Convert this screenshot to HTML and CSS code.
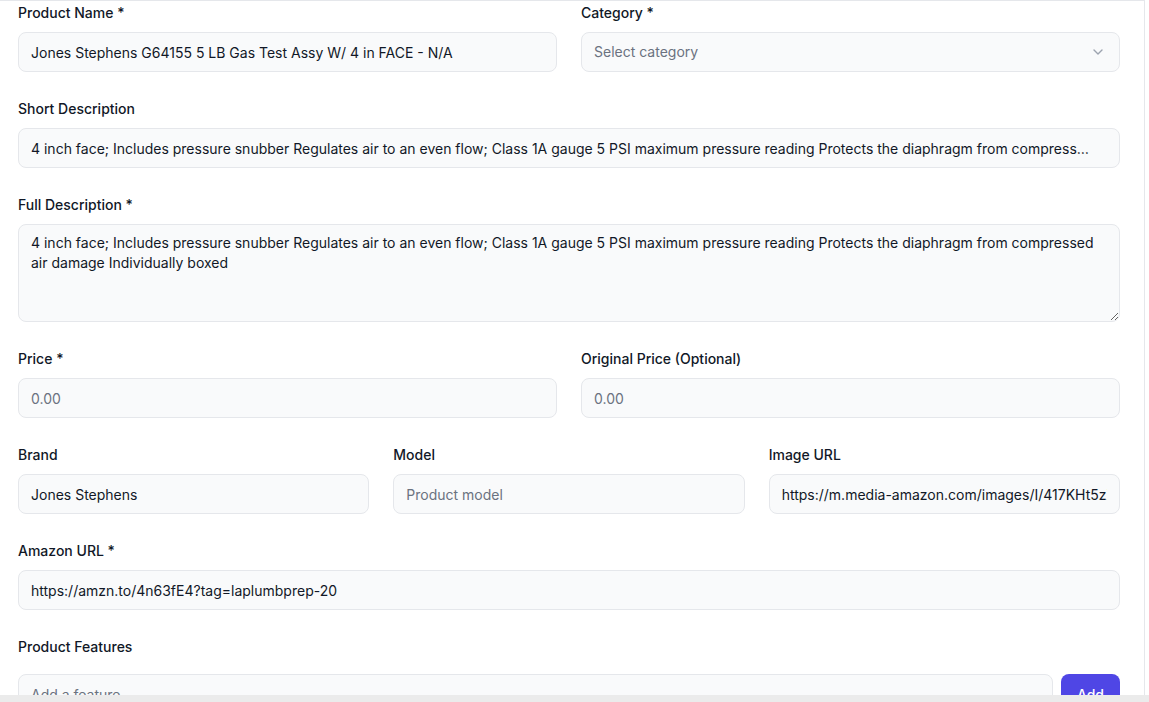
FILE: index.html
```html
<!DOCTYPE html>
<html lang="en">
<head>
<meta charset="utf-8">
<title>Edit Product</title>
<link rel="stylesheet" href="styles.css">
</head>
<body>
<div class="panel">
  <form class="form">
    <div class="row cols-2">
      <div class="field">
        <label class="label">Product Name *</label>
        <input class="input" type="text" value="Jones Stephens G64155 5 LB Gas Test Assy W/ 4 in FACE - N/A">
      </div>
      <div class="field">
        <label class="label">Category *</label>
        <div class="select">
          <span class="select-text">Select category</span>
          <svg class="chevron" width="16" height="16" viewBox="0 0 16 16" fill="none"><polyline points="4,6 8,10 12,6" stroke="#9ca3af" stroke-width="1.4" stroke-linecap="round" stroke-linejoin="round"/></svg>
        </div>
      </div>
    </div>

    <div class="field">
      <label class="label">Short Description</label>
      <input class="input ellipsis" type="text" value="4 inch face; Includes pressure snubber Regulates air to an even flow; Class 1A gauge 5 PSI maximum pressure reading Protects the diaphragm from compressed air damage Individually boxed">
    </div>

    <div class="field">
      <label class="label">Full Description *</label>
      <textarea class="input textarea" rows="4">4 inch face; Includes pressure snubber Regulates air to an even flow; Class 1A gauge 5 PSI maximum pressure reading Protects the diaphragm from compressed air damage Individually boxed</textarea>
    </div>

    <div class="row cols-2">
      <div class="field">
        <label class="label">Price *</label>
        <input class="input" type="text" placeholder="0.00">
      </div>
      <div class="field">
        <label class="label">Original Price (Optional)</label>
        <input class="input" type="text" placeholder="0.00">
      </div>
    </div>

    <div class="row cols-3">
      <div class="field">
        <label class="label">Brand</label>
        <input class="input" type="text" value="Jones Stephens">
      </div>
      <div class="field">
        <label class="label">Model</label>
        <input class="input" type="text" placeholder="Product model">
      </div>
      <div class="field">
        <label class="label">Image URL</label>
        <input class="input" type="text" value="https://m.media-amazon.com/images/I/417KHt5zXqL._SL500_.jpg">
      </div>
    </div>

    <div class="field">
      <label class="label">Amazon URL *</label>
      <input class="input" type="text" value="https://amzn.to/4n63fE4?tag=laplumbprep-20">
    </div>

    <div class="field">
      <label class="label label-lg">Product Features</label>
      <div class="feature-row">
        <input class="input" type="text" placeholder="Add a feature">
        <button type="button" class="btn">Add</button>
      </div>
    </div>
  </form>
</div>
<div class="hscroll"></div>
</body>
</html>
```

FILE: styles.css
```css
html, body {
  margin: 0;
  padding: 0;
  overflow: hidden;
  background: #ffffff;
}

body {
  font-family: Inter, "Noto Sans", "Liberation Sans", sans-serif;
  font-size: 14px;
  line-height: 20px;
  color: #111827;
}

.panel {
  box-sizing: border-box;
  width: 1145px;
  border-top: 1px solid #e5e7eb;
  border-right: 1px solid #e5e7eb;
  padding: 2px 24px 40px 18px;
  background: #ffffff;
}

.form {
  display: flex;
  flex-direction: column;
  gap: 27px;
}

.row {
  display: grid;
  gap: 24px;
}

.cols-2 {
  grid-template-columns: 1fr 1fr;
}

.cols-3 {
  grid-template-columns: 1fr 1fr 1fr;
}

.field {
  display: flex;
  flex-direction: column;
  min-width: 0;
}

.label {
  display: block;
  font-weight: 500;
  font-size: 14px;
  line-height: 20px;
  color: #111827;
  margin-bottom: 9px;
}

.label-lg {
  margin-bottom: 17px;
}

.input {
  box-sizing: border-box;
  width: 100%;
  height: 40px;
  margin: 0;
  padding: 0 12px;
  border: 1px solid #e5e7eb;
  border-radius: 8px;
  background: #f9fafb;
  font-family: Inter, "Noto Sans", "Liberation Sans", sans-serif;
  font-size: 14px;
  line-height: 20px;
  color: #111827;
  outline: none;
}

.ellipsis {
  text-overflow: ellipsis;
  padding-right: 27px;
}

.input::placeholder {
  color: #6b7280;
  opacity: 1;
}

.textarea {
  display: block;
  height: 98px;
  padding: 8px 12px;
  resize: vertical;
}

.select {
  box-sizing: border-box;
  height: 40px;
  display: flex;
  align-items: center;
  justify-content: space-between;
  padding: 0 13px 0 12px;
  border: 1px solid #e5e7eb;
  border-radius: 8px;
  background: #f9fafb;
  color: #6b7280;
}

.chevron {
  display: block;
  flex: none;
}

.feature-row {
  display: flex;
  gap: 8px;
}

.feature-row .input {
  flex: 1;
}

.btn {
  flex: none;
  height: 40px;
  padding: 0 16px;
  border: none;
  border-radius: 8px;
  background: #4f46e5;
  color: #ffffff;
  font-family: Inter, "Noto Sans", "Liberation Sans", sans-serif;
  font-size: 14px;
  font-weight: 500;
  cursor: pointer;
}

.hscroll {
  position: fixed;
  left: 0;
  right: 0;
  bottom: 0;
  height: 7px;
  background: #ebebeb;
}
```
